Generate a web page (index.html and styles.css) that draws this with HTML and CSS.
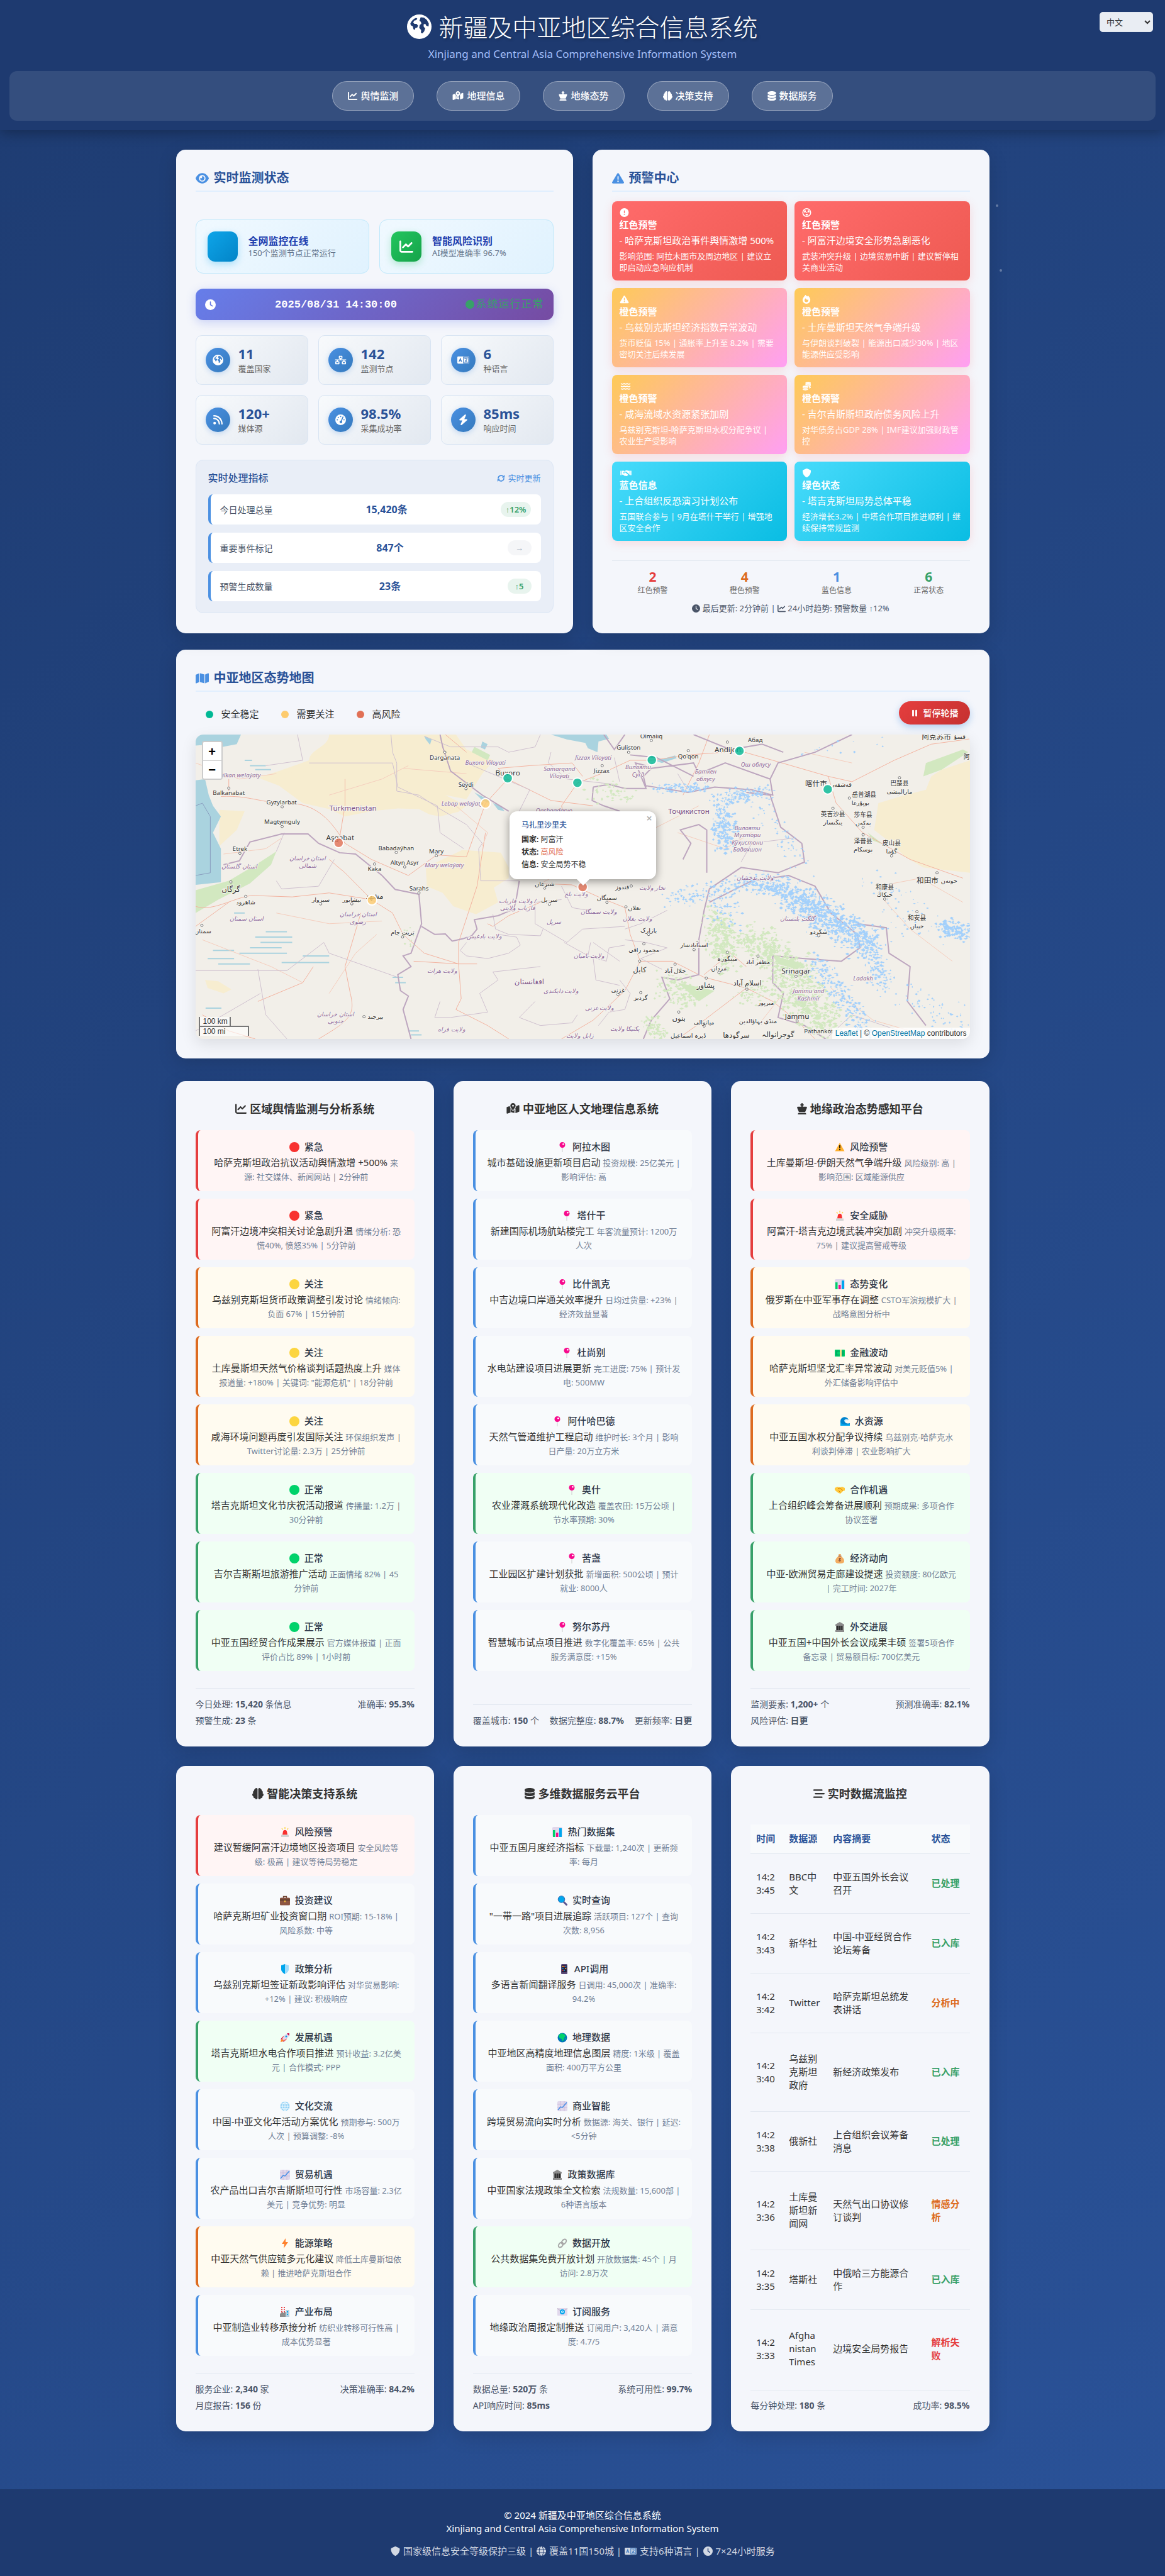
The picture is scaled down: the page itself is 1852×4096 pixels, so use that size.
FILE: index.html
```html
<!DOCTYPE html>
<html lang="zh-CN">
<head>
<meta charset="utf-8">
<meta name="viewport" content="width=device-width, initial-scale=1">
<title>新疆及中亚地区综合信息系统</title>
<link rel="stylesheet" href="styles.css">
</head>
<body>
<svg class="sprite" aria-hidden="true">
  <symbol id="i-earth" viewBox="0 0 512 512"><path fill-rule="evenodd" d="M256 0a256 256 0 1 1 0 512a256 256 0 1 1 0-512zM70 190c20-50 60-95 115-118l30 10-20 35-45 12-20 40 25 28 45 0 30 35-15 40-40 10-10 40-30-15-15-60-40-20zM285 60l70 5 60 50 40 75-5 60-45-15-25-40-35 15 5 50 30 30-20 60-35 45-35-10 5-60-40-45 10-60 35-25-10-40-30-25z"/></symbol>
  <symbol id="i-chart" viewBox="0 0 512 512"><path d="M64 64c0-17.700-14.300-32-32-32S0 46.300 0 64V400c0 44.200 35.800 80 80 80H480c17.700 0 32-14.300 32-32s-14.300-32-32-32H80c-8.800 0-16-7.200-16-16V64zm406.600 86.600c12.500-12.500 12.500-32.800 0-45.300s-32.800-12.500-45.300 0L320 210.700l-57.400-57.400c-12.500-12.500-32.800-12.500-45.300 0l-112 112c-12.500 12.500-12.500 32.800 0 45.300s32.800 12.500 45.300 0L240 221.300l57.400 57.400c12.500 12.500 32.800 12.500 45.300 0l128-128z"/></symbol>
  <symbol id="i-mapdot" viewBox="0 0 576 512"><path fill-rule="evenodd" d="M408 120c0 54.600-73.100 151.900-105.200 192c-7.700 9.600-22 9.600-29.600 0C241.100 271.900 168 174.600 168 120C168 53.700 221.700 0 288 0s120 53.700 120 120zM288 160a40 40 0 1 0 0-80a40 40 0 1 0 0 80zM138 138c6 26 20 54 38 80v208L33 475C17 481 0 469 0 452V202c0-10 6-19 15-22zM384 240c8-12 15-24 22-36 12-20 24-43 31-67l106-42c16-6 33 5 33 22v250c0 10-6 19-15 22l-161 64V240zM192 240c20 32 43 62 61 84 18 22 52 22 70 0l29-38v164l-160-46z"/></symbol>
  <symbol id="i-king" viewBox="0 0 448 512"><path d="M224 0c17.700 0 32 14.300 32 32V48h16c17.700 0 32 14.300 32 32s-14.300 32-32 32H256v48H408c22.100 0 40 17.900 40 40c0 5.300-1 10.500-3.100 15.400L368 400H80L3.100 215.400C1 210.500 0 205.300 0 200c0-22.100 17.900-40 40-40H192V112H176c-17.700 0-32-14.300-32-32s14.300-32 32-32h16V32c0-17.700 14.300-32 32-32zM38.600 473.400L80 432H368l41.400 41.400c4.200 4.200 6.600 10 6.600 16c0 12.500-10.100 22.600-22.600 22.600H54.600C42.100 512 32 501.900 32 489.400c0-6 2.400-11.800 6.600-16z"/></symbol>
  <symbol id="i-brain" viewBox="0 0 512 512"><path d="M184 0c30.900 0 56 25.100 56 56V456c0 30.900-25.100 56-56 56c-28.900 0-52.700-21.900-55.700-50.100c-5.200 1.400-10.700 2.100-16.300 2.100c-35.300 0-64-28.700-64-64c0-7.400 1.300-14.600 3.600-21.200C21.400 367.400 0 338.200 0 304c0-31.900 18.700-59.500 45.800-72.300C37.100 220.800 32 207 32 192c0-30.700 21.600-56.300 50.400-62.600C80.800 123.900 80 118 80 112c0-29.900 20.600-55.100 48.300-62.100C131.300 21.900 155.100 0 184 0zM328 0c28.900 0 52.600 21.900 55.700 49.900c27.800 7 48.300 32.100 48.300 62.100c0 6-.8 11.900-2.400 17.400c28.800 6.200 50.400 31.900 50.400 62.600c0 15-5.100 28.800-13.800 39.700C493.300 244.500 512 272.100 512 304c0 34.200-21.400 63.400-51.600 74.800c2.300 6.600 3.600 13.800 3.600 21.200c0 35.300-28.700 64-64 64c-5.600 0-11.100-.7-16.300-2.100c-3 28.200-26.800 50.100-55.700 50.100c-30.900 0-56-25.100-56-56V56c0-30.900 25.100-56 56-56z"/></symbol>
  <symbol id="i-db" viewBox="0 0 448 512"><path d="M448 80v48c0 44.200-100.300 80-224 80S0 172.200 0 128V80C0 35.800 100.300 0 224 0S448 35.800 448 80zM393.200 214.700c20.800-7.400 39.900-16.900 54.800-28.600V288c0 44.200-100.300 80-224 80S0 332.200 0 288V186.100c14.900 11.800 34 21.200 54.800 28.600C99.700 230.700 159.500 240 224 240s124.300-9.300 169.200-25.300zM0 346.100c14.900 11.800 34 21.200 54.800 28.600C99.700 390.700 159.500 400 224 400s124.300-9.300 169.200-25.300c20.800-7.400 39.900-16.900 54.800-28.600V432c0 44.200-100.300 80-224 80S0 476.200 0 432V346.100z"/></symbol>
  <symbol id="i-eye" viewBox="0 0 576 512"><path d="M288 32c-80.800 0-145.500 36.800-192.600 80.600C48.600 156 17.300 208 2.500 243.700c-3.300 7.900-3.300 16.700 0 24.600C17.300 304 48.600 356 95.400 399.400C142.500 443.200 207.200 480 288 480s145.500-36.800 192.600-80.600c46.800-43.500 78.100-95.400 93-131.100c3.300-7.900 3.300-16.700 0-24.600c-14.900-35.700-46.200-87.700-93-131.100C433.500 68.800 368.800 32 288 32zM144 256a144 144 0 1 1 288 0 144 144 0 1 1 -288 0zm144-64c0 35.300-28.700 64-64 64c-7.100 0-13.900-1.200-20.300-3.300c-5.500-1.800-11.900 1.600-11.700 7.400c.3 6.900 1.300 13.800 3.200 20.700c13.700 51.200 66.400 81.600 117.600 67.900s81.600-66.400 67.900-117.600c-11.100-41.500-47.800-69.400-88.600-71.100c-5.800-.2-9.200 6.100-7.400 11.700c2.100 6.400 3.300 13.200 3.300 20.300z"/></symbol>
  <symbol id="i-warn" viewBox="0 0 512 512"><path d="M256 32c14.200 0 27.300 7.500 34.500 19.800l216 368c7.300 12.400 7.300 27.700 .2 40.100S486.300 480 472 480H40c-14.300 0-27.600-7.700-34.700-20.100s-7-27.800 .2-40.100l216-368C228.700 39.500 241.800 32 256 32zm0 128c-13.300 0-24 10.700-24 24V296c0 13.300 10.700 24 24 24s24-10.700 24-24V184c0-13.300-10.700-24-24-24zm32 224a32 32 0 1 0 -64 0 32 32 0 1 0 64 0z"/></symbol>
  <symbol id="i-excl" viewBox="0 0 512 512"><path d="M256 512A256 256 0 1 0 256 0a256 256 0 1 0 0 512zm0-384c13.300 0 24 10.700 24 24V264c0 13.300-10.700 24-24 24s-24-10.700-24-24V152c0-13.300 10.700-24 24-24zM224 352a32 32 0 1 1 64 0 32 32 0 1 1 -64 0z"/></symbol>
  <symbol id="i-clock" viewBox="0 0 512 512"><path d="M256 0a256 256 0 1 1 0 512A256 256 0 1 1 256 0zM232 120V256c0 8 4 15.500 10.700 20l96 64c11 7.400 25.900 4.400 33.300-6.700s4.400-25.900-6.700-33.300L280 243.200V120c0-13.300-10.700-24-24-24s-24 10.700-24 24z"/></symbol>
  <symbol id="i-net" viewBox="0 0 640 512"><path fill-rule="evenodd" d="M256 32h128c18 0 32 14 32 32v96c0 18-14 32-32 32h-32v32h256c18 0 18 48 0 48h-80v48h48c18 0 32 14 32 32v96c0 18-14 32-32 32H416c-18 0-32-14-32-32v-96c0-18 14-32 32-32h48v-48H176v48h48c18 0 32 14 32 32v96c0 18-14 32-32 32H64c-18 0-32-14-32-32v-96c0-18 14-32 32-32h48v-48H32c-18 0-18-48 0-48h256v-32h-32c-18 0-32-14-32-32V64c0-18 14-32 32-32zm24 56v48h80V88zM88 376v48h112v-48zm352 0v48h112v-48z"/></symbol>
  <symbol id="i-lang" viewBox="0 0 640 512"><path fill-rule="evenodd" d="M48 64h544c26 0 48 22 48 48v288c0 26-22 48-48 48H48c-26 0-48-22-48-48V112c0-26 22-48 48-48z"/><path class="cut" d="M90 350l72-180 72 180M112 296h100M330 100v312h270V100zM376 190h180M466 150v40M400 340c60-24 100-70 120-146M420 240c20 40 60 80 110 100"/></symbol>
  <symbol id="i-rss" viewBox="0 0 448 512"><path d="M0 64C0 46.300 14.300 32 32 32c229.800 0 416 186.200 416 416c0 17.700-14.300 32-32 32s-32-14.300-32-32C384 253.600 226.400 96 32 96C14.300 96 0 81.700 0 64zM0 416a64 64 0 1 1 128 0A64 64 0 1 1 0 416zM32 160c159.100 0 288 128.900 288 288c0 17.700-14.300 32-32 32s-32-14.300-32-32c0-123.700-100.300-224-224-224c-17.700 0-32-14.300-32-32s14.300-32 32-32z"/></symbol>
  <symbol id="i-gauge" viewBox="0 0 512 512"><path fill-rule="evenodd" d="M256 0a256 256 0 1 1 0 512a256 256 0 1 1 0-512zM256 64a32 32 0 1 0 0 64a32 32 0 1 0 0-64zM144 112a32 32 0 1 0 0 64a32 32 0 1 0 0-64zM96 224a32 32 0 1 0 0 64a32 32 0 1 0 0-64zM416 224a32 32 0 1 0 0 64a32 32 0 1 0 0-64zM350 106l-80 186a64 64 0 1 0 44 18l80-184c6-20-34-38-44-20z"/></symbol>
  <symbol id="i-bolt" viewBox="0 0 448 512"><path d="M349.400 44.600c5.900-13.700 1.500-29.700-10.600-38.500s-28.600-8-39.900 1.800l-256 224c-10 8.800-13.600 22.900-8.900 35.300S50.700 288 64 288H175.500L98.600 467.400c-5.900 13.700-1.500 29.700 10.600 38.500s28.600 8 39.900-1.800l256-224c10-8.800 13.600-22.900 8.900-35.300s-16.600-20.700-30-20.700H272.500L349.400 44.600z"/></symbol>
  <symbol id="i-sync" viewBox="0 0 512 512"><path fill="none" stroke="currentColor" stroke-width="64" stroke-linecap="round" d="M80 240C90 90 290 30 400 140M432 272C422 422 222 482 112 372"/><path d="M480 40v152c0 18-14 24-28 24H310zM32 472V320c0-18 14-24 28-24h142z"/></symbol>
  <symbol id="i-map" viewBox="0 0 576 512"><path d="M384 476.100L192 421.200V35.900L384 90.800V476.100zm32-1.200V88.400L543.100 37.500c15.800-6.300 32.900 5.300 32.900 22.300V394.600c0 9.800-6 18.600-15.100 22.300L416 474.800zM15.100 95.100L160 37.200V423.600L32.900 474.500C17.100 480.800 0 469.200 0 452.200V117.400c0-9.800 6-18.600 15.100-22.300z"/></symbol>
  <symbol id="i-rad" viewBox="0 0 512 512"><path fill-rule="evenodd" d="M256 0a256 256 0 1 1 0 512a256 256 0 1 1 0-512zM256 56a200 200 0 1 0 0 400a200 200 0 1 0 0-400z"/><circle cx="256" cy="256" r="36"/><path d="M90 246h98c0-26 12-46 32-58l-50-84c-46 28-78 80-80 142zM422 246h-98c0-26-12-46-32-58l50-84c46 28 78 80 80 142zM256 326c-12 0-24-4-34-10l-50 84c50 30 118 30 168 0l-50-84c-10 6-22 10-34 10z"/></symbol>
  <symbol id="i-fire" viewBox="0 0 448 512"><path fill-rule="evenodd" d="M159 5c8-7 20-6 28 1 28 27 54 56 79 89 11-14 24-30 38-43 8-8 20-8 28 0 36 34 66 79 87 121 21 41 29 83 29 113 0 130-101 226-224 226C100 512 0 416 0 286 0 247 18 199 46 152c28-48 68-100 113-147zM226 416c25 0 47-7 68-21 42-29 53-88 28-134-5-9-16-10-23-2l-25 29c-7 8-18 7-24-1-17-22-47-60-64-81-6-8-18-8-24 0-34 43-52 71-52 102 0 69 51 108 116 108z"/></symbol>
  <symbol id="i-water" viewBox="0 0 576 512"><path fill="none" stroke="currentColor" stroke-width="56" stroke-linecap="round" d="M32 116c60 40 110 40 170-8 60 48 112 48 172 0 60 48 110 48 170 8M32 262c60 40 110 40 170-8 60 48 112 48 172 0 60 48 110 48 170 8M32 408c60 40 110 40 170-8 60 48 112 48 172 0 60 48 110 48 170 8"/></symbol>
  <symbol id="i-coins" viewBox="0 0 512 512"><ellipse cx="336" cy="70" rx="160" ry="64"/><path d="M180 116c50 50 270 50 316 0v44c-20 46-110 64-190 56-40-14-90-20-126-20zM350 240c60-2 120-18 146-46v50c-20 34-70 46-120 50zM380 330c50-6 90-18 116-44v50c-20 34-66 46-116 50z"/><ellipse cx="176" cy="276" rx="160" ry="60"/><path d="M16 314c50 46 270 46 320 0v40c-40 60-280 60-320 0zM16 400c50 46 270 46 320 0v50c-40 70-280 70-320 0z"/></symbol>
  <symbol id="i-hand" viewBox="0 0 640 512"><path d="M0 128h64v256H0zM576 128h64v256h-64zM96 128h100l48 16-80 90c-8 40 50 60 80 30l50-36 150 130c20 30-10 50-30 36 0 30-30 40-50 24-10 24-50 26-66 6-20 20-50 10-60-6l-84-60H96zM544 128H440l-50-24c-40-16-80-4-106 24l-84 92c0 16 26 22 40 8l66-52 32 4 150 132c14 12 20 26 20 40h36z"/></symbol>
  <symbol id="i-shield" viewBox="0 0 512 512"><path d="M256 0c4.600 0 9.200 1 13.400 2.900L457.700 82.800c22 9.300 38.400 31 38.300 57.200c-.5 99.200-41.300 280.700-213.600 363.200c-16.700 8-36.100 8-52.800 0C57.300 420.700 16.500 239.200 16 140c-.1-26.200 16.300-47.900 38.300-57.200L242.700 2.900C246.800 1 251.400 0 256 0z"/></symbol>
  <symbol id="i-globe" viewBox="0 0 512 512"><path d="M352 256c0 22-1 43-3 64H163c-2-21-3-42-3-64s1-43 3-64h186c2 21 3 42 3 64zM504 192c5 20 8 42 8 64s-3 44-8 64H381c2-21 3-42 3-64s-1-43-3-64zM493 160H377C367 96 347 43 322 10c79 20 142 77 171 150zM345 160H167c6-36 16-69 27-95 22-50 46-65 62-65s40 15 62 65c12 26 21 59 27 95zM135 160H19C48 87 111 30 190 10c-26 33-45 86-55 150zM8 192h123c-2 21-3 42-3 64s1 43 3 64H8c-5-20-8-42-8-64s3-44 8-64zM167 352h178c-6 36-15 68-27 95-22 50-46 65-62 65s-40-15-62-65c-11-27-21-59-27-95zM135 352c10 64 29 117 55 150C111 482 48 425 19 352zM493 352c-29 73-92 130-171 150 26-33 45-86 55-150z"/></symbol>
  <symbol id="i-stream" viewBox="0 0 512 512"><path d="M32 64h352c40 0 40 64 0 64H32c-42 0-42-64 0-64zM96 224h384c40 0 40 64 0 64H96c-42 0-42-64 0-64zM32 384h352c40 0 40 64 0 64H32c-42 0-42-64 0-64z"/></symbol>
  <symbol id="i-pause" viewBox="0 0 320 512"><rect x="16" y="64" width="104" height="384" rx="44"/><rect x="200" y="64" width="104" height="384" rx="44"/></symbol>

  <symbol id="e-red" viewBox="0 0 16 16"><circle cx="8" cy="8" r="8" fill="#f8312f"/></symbol>
  <symbol id="e-yellow" viewBox="0 0 16 16"><circle cx="8" cy="8" r="8" fill="#fcd53f"/></symbol>
  <symbol id="e-green" viewBox="0 0 16 16"><circle cx="8" cy="8" r="8" fill="#00d26a"/></symbol>
  <symbol id="e-pin" viewBox="0 0 16 16"><path stroke="#ccc" stroke-width="1" d="M8 8v8"/><circle cx="8" cy="4.500" r="4.500" fill="#f70a8d"/><circle cx="9.400" cy="3.200" r="1.300" fill="#fff"/></symbol>
  <symbol id="e-warn" viewBox="0 0 16 16"><path fill="#ffb02e" d="M8 1l7.500 13.500H.5z"/><path fill="#000" d="M7.200 5h1.600v5H7.200zM7.200 11h1.600v2H7.200z"/></symbol>
  <symbol id="e-siren" viewBox="0 0 16 16"><path stroke="#fcd53f" stroke-width="1.300" d="M8 0v3M3 2l1.500 2.500M13 2l-1.500 2.500"/><path fill="#f8312f" d="M4 12.500L5 7c1-3 5-3 6 0l1 5.500z"/><path fill="#d3d3d3" d="M2 12.500h12V16H2z"/></symbol>
  <symbol id="e-bars" viewBox="0 0 16 16"><rect width="16" height="16" rx="2" fill="#e1d8ec"/><path fill="#00d26a" d="M1 5h3.500v11H1z"/><path fill="#f70a8d" d="M6 9h3.500v7H6z"/><path fill="#00a6ed" d="M11 2h4v14h-4z"/></symbol>
  <symbol id="e-cash" viewBox="0 0 16 16"><rect y="3" width="16" height="11" rx="1" fill="#00d26a"/><rect x="1.500" y="4.500" width="13" height="8" fill="#008463" opacity=".5"/><circle cx="6" cy="8.500" r="2.500" fill="#00d26a"/><path fill="#f9e08b" d="M8 3h3v11H8z"/></symbol>
  <symbol id="e-wave" viewBox="0 0 16 16"><path fill="#0084ce" d="M1 15V8c0-8 11-9 13-2-3-2-6-1-6 2s4 4 8 3v4z"/><path fill="#d3efff" d="M7 8c0-3 3-5 7-2l-2 1c-2-1-3 0-3 2z"/><path fill="#00a6ed" d="M1 15V9c2 4 6 5 15 3v3z"/></symbol>
  <symbol id="e-hands" viewBox="0 0 16 16"><path fill="#ffc83d" d="M0 5l4-2 4 1 4-1 4 2v4l-3 1-4 4-3-1-4-3-2-2z"/><path fill="none" stroke="#d67d00" d="M5 6l3-1 5 4M6 9l3 3"/></symbol>
  <symbol id="e-bag" viewBox="0 0 16 16"><path fill="#f3ad61" d="M6 1h4l-1 3c4 2 6 5 6 8s-2 4-7 4-7-1-7-4 2-6 6-8z"/><path fill="#a56953" d="M5.500 3.500h5v1.400h-5z"/><path fill="none" stroke="#7d4533" d="M10 8.500c-3-2-4 1-2 1.500s2 3-2 1.500M8 7v6"/></symbol>
  <symbol id="e-bank" viewBox="0 0 16 16"><path fill="#8c8c8c" d="M8 0l7 4v2H1V4zM1 13h14v3H1z"/><path fill="#636363" d="M2 6h12v7H2z"/><path fill="#222" d="M4 6h1.500v7H4zM7.200 6h1.600v7H7.200zM10.500 6H12v7h-1.500z"/></symbol>
  <symbol id="e-case" viewBox="0 0 16 16"><path fill="none" stroke="#6d4534" stroke-width="1.300" d="M5.500 4V1.500h5V4"/><rect y="3.500" width="16" height="12" rx="1.500" fill="#8c5543"/><path fill="#6d4534" d="M0 5h16v4H0z"/><path fill="#f9c23c" d="M7 8h2v2.500H7z"/></symbol>
  <symbol id="e-shield" viewBox="0 0 16 16"><path fill="#00a6ed" d="M8 0L2 2v6c0 4 3 6 6 8z"/><path fill="#9fdcfb" d="M8 0l6 2v6c0 4-3 6-6 8z"/></symbol>
  <symbol id="e-rocket" viewBox="0 0 16 16"><path fill="#f8312f" d="M3 8l3-3 3 1-4 4zM8 13l3-3-1-3-4 4z"/><path fill="#e1d8ec" d="M4 10C6 4 10 1 15 1c0 5-3 9-9 11z"/><path fill="#ca0b4a" d="M11 1.500C12 1 14 1 15 1c0 1 0 3-.5 4z"/><circle cx="10" cy="6" r="1.500" fill="#00a6ed"/><path fill="#ff822d" d="M1 15l1-4 2-1 2 2-1 2z"/><path fill="#ca0b4a" d="M3 8L1 11l3-1zM8 13l-3 2 1-3z"/></symbol>
  <symbol id="e-globe" viewBox="0 0 16 16"><circle cx="8" cy="8" r="7.500" fill="#8fd0f5"/><path fill="none" stroke="#fff" stroke-width=".9" d="M8 .5v15M.5 8h15M2 4h12M2 12h12M8 .5c-5 4-5 11 0 15M8 .5c5 4 5 11 0 15"/></symbol>
  <symbol id="e-trend" viewBox="0 0 16 16"><rect width="16" height="16" rx="2" fill="#e1d8ec"/><path stroke="#c5b5d6" stroke-width=".7" d="M0 5h16M0 10h16M5 0v16M11 0v16"/><path fill="none" stroke="#3f8be8" stroke-width="1.400" d="M1 14l4-5 3 1 7-8"/></symbol>
  <symbol id="e-bolt" viewBox="0 0 16 16"><path fill="#ff822d" d="M9 0L3 9h4l-1 7 7-10H9z"/></symbol>
  <symbol id="e-factory" viewBox="0 0 16 16"><path fill="#e5484d" d="M2 0h2v9H2zM6 0h2v9H6z"/><path fill="#fff" d="M2 2h2v1.500H2zM6 2h2v1.500H6zM2 5h2v1.500H2zM6 5h2v1.500H6z"/><path fill="#8c8c8c" d="M0 11l5-3v2l4-2v8H0z"/><path fill="#b4cfe0" d="M9 5h6v11H9z"/><path fill="#00a6ed" d="M11 7h2v2h-2zM11 11h2v2h-2z"/></symbol>
  <symbol id="e-search" viewBox="0 0 16 16"><path stroke="#5b5590" stroke-width="3" stroke-linecap="round" d="M10 10l4.500 4.500"/><circle cx="6.500" cy="6" r="5.300" fill="#00a6ed" stroke="#3b6cb3"/></symbol>
  <symbol id="e-phone" viewBox="0 0 16 16"><rect x="3" width="10" height="16" rx="1.500" fill="#5a4a78"/><path fill="#26203a" d="M4.200 2h7.600v11H4.200z"/><path fill="#f9c23c" d="M5 3h1.700v1.700H5zM9.500 6h1.700v1.700H9.500z"/><path fill="#f8312f" d="M7.200 3h1.700v1.700H7.200zM5 9h1.700v1.700H5z"/><path fill="#00a6ed" d="M9.500 3h1.700v1.700H9.500zM5 6h1.700v1.700H5zM7.200 9h1.700v1.700H7.200z"/></symbol>
  <symbol id="e-earth" viewBox="0 0 16 16"><circle cx="8" cy="8" r="7.500" fill="#0074ba"/><path fill="#00d26a" d="M3 3l4-2 5 2 1 3-2 2-1 4-2 2-1-4-3-1-2-3zM12 9l2 0-1 3z"/></symbol>
  <symbol id="e-link" viewBox="0 0 16 16"><g fill="none" stroke="#a6a6a6" stroke-width="2"><ellipse cx="5.500" cy="10.500" rx="3" ry="4.500" transform="rotate(40 5.500 10.500)"/><ellipse cx="10.500" cy="5.500" rx="3" ry="4.500" transform="rotate(40 10.500 5.500)"/></g></symbol>
  <symbol id="e-mail" viewBox="0 0 16 16"><rect y="2" width="16" height="12" rx="1" fill="#e1d8ec"/><path fill="none" stroke="#b4acbc" d="M0 2.500l8 6 8-6"/><circle cx="8" cy="8" r="4" fill="#00a6ed"/><circle cx="8" cy="8" r="1.500" fill="none" stroke="#fff"/></symbol>
</svg>

<span class="particle particle-a"></span><span class="particle particle-b"></span>

<header class="site-header">
  <select class="lang-select" aria-label="语言"><option>中文</option><option>English</option></select>
  <h1 class="site-title"><svg class="ic"><use href="#i-earth"/></svg>新疆及中亚地区综合信息系统</h1>
  <p class="site-sub">Xinjiang and Central Asia Comprehensive Information System</p>
  <nav class="nav">
    <a href="#opinion"><svg class="ic"><use href="#i-chart"/></svg>舆情监测</a>
    <a href="#geo"><svg class="ic wide"><use href="#i-mapdot"/></svg>地理信息</a>
    <a href="#politics"><svg class="ic narrow"><use href="#i-king"/></svg>地缘态势</a>
    <a href="#decision"><svg class="ic"><use href="#i-brain"/></svg>决策支持</a>
    <a href="#data"><svg class="ic narrow"><use href="#i-db"/></svg>数据服务</a>
  </nav>
</header>

<main class="main">
<div class="top-grid">
  <section class="card">
    <h2 class="card-title"><svg class="ic wide"><use href="#i-eye"/></svg>实时监测状态</h2>
    <div class="status-grid">
      <div class="status"><span class="status-icon sky"></span><div><strong>全网监控在线</strong><p>150个监测节点正常运行</p></div></div>
      <div class="status"><span class="status-icon green"><svg class="ic"><use href="#i-chart"/></svg></span><div><strong>智能风险识别</strong><p>AI模型准确率 96.7%</p></div></div>
    </div>
    <div class="timebar"><svg class="ic"><use href="#i-clock"/></svg><time>2025/08/31 14:30:00</time><span class="running">系统运行正常</span></div>
    <div class="metric-grid">
      <div class="metric"><span class="disc"><svg class="ic"><use href="#i-earth"/></svg></span><div><strong>11</strong><p>覆盖国家</p></div></div>
      <div class="metric"><span class="disc"><svg class="ic wide"><use href="#i-net"/></svg></span><div><strong>142</strong><p>监测节点</p></div></div>
      <div class="metric"><span class="disc"><svg class="ic wide"><use href="#i-lang"/></svg></span><div><strong>6</strong><p>种语言</p></div></div>
      <div class="metric"><span class="disc"><svg class="ic"><use href="#i-rss"/></svg></span><div><strong>120+</strong><p>媒体源</p></div></div>
      <div class="metric"><span class="disc"><svg class="ic"><use href="#i-gauge"/></svg></span><div><strong>98.5%</strong><p>采集成功率</p></div></div>
      <div class="metric"><span class="disc"><svg class="ic"><use href="#i-bolt"/></svg></span><div><strong>85ms</strong><p>响应时间</p></div></div>
    </div>
    <div class="panel">
      <div class="panel-head"><h3>实时处理指标</h3><span><svg class="ic"><use href="#i-sync"/></svg>实时更新</span></div>
      <div class="panel-row"><span>今日处理总量</span><strong>15,420条</strong><em>↑12%</em></div>
      <div class="panel-row"><span>重要事件标记</span><strong>847个</strong><em class="flat">→</em></div>
      <div class="panel-row"><span>预警生成数量</span><strong>23条</strong><em>↑5</em></div>
    </div>
  </section>

  <section class="card">
    <h2 class="card-title"><svg class="ic"><use href="#i-warn"/></svg>预警中心</h2>
    <div class="alert-grid">
      <article class="alert red"><svg class="ic"><use href="#i-excl"/></svg><strong>红色预警</strong><p>- 哈萨克斯坦政治事件舆情激增 500%</p><small>影响范围: 阿拉木图市及周边地区 | 建议立<br>即启动应急响应机制</small></article>
      <article class="alert red"><svg class="ic"><use href="#i-rad"/></svg><strong>红色预警</strong><p>- 阿富汗边境安全形势急剧恶化</p><small>武装冲突升级 | 边境贸易中断 | 建议暂停相<br>关商业活动</small></article>
      <article class="alert orange"><svg class="ic"><use href="#i-warn"/></svg><strong>橙色预警</strong><p>- 乌兹别克斯坦经济指数异常波动</p><small>货币贬值 15% | 通胀率上升至 8.2% | 需要<br>密切关注后续发展</small></article>
      <article class="alert orange"><svg class="ic narrow"><use href="#i-fire"/></svg><strong>橙色预警</strong><p>- 土库曼斯坦天然气争端升级</p><small>与伊朗谈判破裂 | 能源出口减少30% | 地区<br>能源供应受影响</small></article>
      <article class="alert orange"><svg class="ic wide"><use href="#i-water"/></svg><strong>橙色预警</strong><p>- 咸海流域水资源紧张加剧</p><small>乌兹别克斯坦-哈萨克斯坦水权分配争议 |<br>农业生产受影响</small></article>
      <article class="alert orange"><svg class="ic"><use href="#i-coins"/></svg><strong>橙色预警</strong><p>- 吉尔吉斯斯坦政府债务风险上升</p><small>对华债务占GDP 28% | IMF建议加强财政管<br>控</small></article>
      <article class="alert cyan"><svg class="ic wider"><use href="#i-hand"/></svg><strong>蓝色信息</strong><p>- 上合组织反恐演习计划公布</p><small>五国联合参与 | 9月在塔什干举行 | 增强地<br>区安全合作</small></article>
      <article class="alert cyan"><svg class="ic"><use href="#i-shield"/></svg><strong>绿色状态</strong><p>- 塔吉克斯坦局势总体平稳</p><small>经济增长3.2% | 中塔合作项目推进顺利 | 继<br>续保持常规监测</small></article>
    </div>
    <div class="alert-sum">
      <div><strong class="c-red">2</strong><span>红色预警</span></div>
      <div><strong class="c-orange">4</strong><span>橙色预警</span></div>
      <div><strong class="c-blue">1</strong><span>蓝色信息</span></div>
      <div><strong class="c-green">6</strong><span>正常状态</span></div>
    </div>
    <p class="alert-note"><svg class="ic"><use href="#i-clock"/></svg> 最后更新: 2分钟前 | <svg class="ic"><use href="#i-chart"/></svg> 24小时趋势: 预警数量 ↑12%</p>
  </section>
</div>

<section class="card map-card">
  <h2 class="card-title"><svg class="ic wide"><use href="#i-map"/></svg>中亚地区态势地图</h2>
  <div class="map-bar">
    <ul class="legend"><li class="l-safe">安全稳定</li><li class="l-watch">需要关注</li><li class="l-risk">高风险</li></ul>
    <button class="pause" type="button"><svg class="ic narrow"><use href="#i-pause"/></svg>暂停轮播</button>
  </div>
  <div class="map">
    <svg class="map-svg" viewBox="0 0 1272 500" preserveAspectRatio="xMidYMid slice" role="img" aria-label="中亚地区地图">
      <g transform="scale(.8673 .4401) translate(-47 -334)">
        <g class="sand">
          <path d="M300 334C300 380 262 390 262 430L205 470 165 495 205 525 250 590 300 612 330 640 380 620 430 610 470 612 490 632 510 640 545 622 560 600 520 560 560 575 590 480 612 430 560 390 540 334z"/>
          <path d="M552 765L590 770 625 775 640 830 640 870 612 905 620 960 578 1005 535 975 515 925 485 900 483 830z"/>
          <path d="M92 615L140 620 125 690 92 750z"/>
          <path d="M1514 430L1460 465 1440 490 1430 540 1390 560 1340 590 1332 690 1365 740 1390 790 1425 830 1514 850z"/>
          <path d="M65 1250L90 1255 115 1285 100 1300 70 1280zM200 480L260 470 255 490 200 500z"/>
        </g>
        <g class="sea">
          <path d="M47 334H133L125 370 85 385 65 372 47 375z"/>
          <path d="M47 505L65 500 72 560 80 600 95 640 80 700 95 760 95 885 47 895z"/>
          <path d="M720 334H825L830 350 810 360 808 400 790 385 785 365 750 352zM918 432L955 412 958 422 930 440zM590 360l10 10-5 20-8-8zM575 550L600 575 605 590 590 580zM610 590L625 600 632 620 620 615zM480 340l14 12-3 20-8-20z"/>
        </g>
        <g class="wood">
          <path d="M47 915L110 880 165 815 200 770 190 820 150 890 90 950 47 1000z"/>
          <path d="M575 380L605 410 600 430 570 400zM1430 440L1500 390 1510 400 1460 465 1425 490zM1320 700L1350 745 1330 730zM1140 1160L1200 1190 1185 1210 1150 1190zM960 1260L1030 1290 1000 1330z"/>
        </g>
        <path class="marsh" d="M180 1070h40M160 1090h70M170 1110h60M150 1130h60M130 1150h90M80 1140h40M70 1170h50M120 1000h20M90 1190h60M210 1185h90M250 1160h50M420 1240h20M425 1260h20M450 1440h20M455 1455h20M140 430h14M150 450h30M160 465h30M66 1355h30"/>
        <path class="road" d="M95 565C150 560 170 590 220 590S300 640 330 740L380 800 450 860 503 784 560 790 596 591 638 500M318 740L330 600 330 500M110 500L110 560M47 975C80 1000 130 930 160 935L230 940 300 925 380 950 420 1000 440 1080 480 1150 545 1190 550 1320 540 1360 600 1420 640 1470M545 1190L545 1110 580 900 596 700M380 950L330 850 300 800M47 1050L110 960M280 1470C340 1400 350 1380 340 1300L330 1200 360 1000M160 1470L110 1440 60 1380M165 1330L250 1260 270 1200M560 400L520 334M638 500L620 460 680 450 760 440 780 490M770 515L815 480 870 430 912 430M638 500L720 580 800 600M770 515L740 600 745 640M912 430L980 410 1078 395 1140 430 1245 490 1290 510 1370 430 1440 370 1514 350M1245 490L1260 590 1310 700 1400 800 1500 870M545 1190L460 1180M580 1190L545 1190M600 1040L610 1050 640 1010 700 960M889 1180L950 1180 1010 1240 1090 1280 1140 1330 1190 1410 1220 1470M889 1180L860 1290 800 1400 740 1470M889 1180L870 1080 860 980 810 940 760 895 700 890M1090 1280L1010 1400 960 1470M1090 1200L1060 1150 1010 1230M970 560L1000 440 1020 334"/>
        <path class="road2" d="M47 440L130 500 200 480M300 560L400 500 450 450M440 460L560 480M100 780L180 760 210 720M200 1000L300 1040 400 1030M60 1100L190 1200 250 1260M390 1080L350 1150 300 1300M740 850L700 890M1100 700L1050 760 960 700M1340 900L1420 870 1500 960M1350 950L1400 1060 1480 1180M1000 600L900 700 860 640M1200 400L1290 440M1120 1400L1160 1300M1250 1280L1330 1400 1400 1440M590 750L600 700 540 600"/>
        <path class="state" d="M240 334L250 430 180 450M262 440L420 440 430 530 505 600 510 700 555 760M417 334L420 400 428 440 428 545 470 560 500 600 560 670 590 740 583 760 587 880H660M200 770L215 700M200 880L210 910 280 900 310 800M47 1215H220L290 1110 300 1150 430 1240M170 1300L100 1380 47 1440M165 1210L180 1380 220 1470M610 1005L615 1060 640 1080 700 1085 705 1060M560 1110L548 1140 560 1160 600 1170 640 1150 662 1120 655 1090 620 1080M740 950L690 960 690 1040 750 1110 780 1060 860 1050M860 1120L830 1130 825 1180 790 1160 795 1110M745 1110L800 1170 805 1250 850 1270M700 1200L610 1220 620 1250 585 1300 600 1370 530 1390 500 1390 510 1330M690 1330L660 1390 700 1420 760 1410 770 1380M860 1100L900 1110 940 1130 890 1170 930 1210M850 1250L870 1300 860 1360 830 1370 810 1420M740 900L760 980 790 990M860 1060L890 1040 940 990M1080 810L1100 740 1180 720M1240 1470L1290 1380 1380 1440M480 340L530 380 620 380 640 400 690 380 700 334M720 400L715 440 750 500 840 520M560 440L680 540 660 620M840 420L850 510M960 480L975 530M800 1110L850 1180"/>
        <path class="border" d="M510 334L515 380 530 470 590 560 640 620M100 820L130 805 150 735 210 705 260 705 280 740 320 775 350 780 400 860 425 912 470 930 475 1040 455 1150 440 1160 455 1200 430 1230 435 1290 450 1310 440 1360 455 1470M475 1050L500 1080 520 1078 533 1105 555 1095 570 1085 580 1060 575 1025 620 1010 650 985 655 940 660 880M800 530L830 520 860 535 900 535 880 440 900 450M800 530L798 580 820 600 850 620 852 660M820 334L840 390 860 334M900 530L895 490 910 460 990 440 1000 480 1050 440 1135 500 1140 560 1100 540 1030 530 980 550 900 525M870 410L920 420 950 450 990 490M970 800L985 740 965 690 1000 670 1015 690 1015 770 1015 850M1090 550L1135 560 1155 680 1195 740 1200 810 1150 850 1080 830 1020 910 1010 990 1000 1100 1000 1230 960 1250 930 1240 945 1320 910 1400 895 1470M1020 960L1100 880 1170 860 1220 900 1250 1000 1300 1080 1305 1130 1270 1180 1200 1170 1140 1160 1140 1260 1160 1300 1150 1390 1200 1420 1240 1470M1300 1040L1355 1055 1360 1150 1400 1200 1395 1330 1430 1420M1135 500L1150 440 1220 400 1290 334M990 334L1060 390 1120 370 1160 400"/>
        <path class="lines" d="M47 600L60 590 75 640 75 850 47 860"/>
        <path id="woodland" class="woodland"/>
        <path id="glaciers" class="glacier"/>
      </g>
      <g id="labels"></g>
      <g id="markers"></g>
    </svg>
    <div class="popup">
      <button type="button" class="popup-close" aria-label="关闭">×</button>
      <strong class="popup-title">马扎里沙里夫</strong>
      <p><b>国家:</b> 阿富汗</p><p><b>状态:</b> <span class="risk">高风险</span></p><p><b>信息:</b> 安全局势不稳</p>
    </div>
    <div class="zoom"><button type="button" aria-label="放大">+</button><button type="button" aria-label="缩小">−</button></div>
    <div class="scale"><span class="km">100 km</span><span class="mi">100 mi</span></div>
    <div class="attrib"><a href="#leaflet">Leaflet</a> | © <a href="#osm">OpenStreetMap</a> contributors</div>
  </div>
</section>

<div class="feeds">
  <section class="card feed" id="opinion">
    <h3><svg class="ic"><use href="#i-chart"/></svg>区域舆情监测与分析系统</h3>
    <ul>
      <li class="red"><strong><svg><use href="#e-red"/></svg>紧急</strong><p>哈萨克斯坦政治抗议活动舆情激增 +500% <small>来<br>源: 社交媒体、新闻网站 | 2分钟前</small></p></li>
      <li class="red"><strong><svg><use href="#e-red"/></svg>紧急</strong><p>阿富汗边境冲突相关讨论急剧升温 <small>情绪分析: 恐<br>慌40%, 愤怒35% | 5分钟前</small></p></li>
      <li class="orange"><strong><svg><use href="#e-yellow"/></svg>关注</strong><p>乌兹别克斯坦货币政策调整引发讨论 <small>情绪倾向:<br>负面 67% | 15分钟前</small></p></li>
      <li class="orange"><strong><svg><use href="#e-yellow"/></svg>关注</strong><p>土库曼斯坦天然气价格谈判话题热度上升 <small>媒体<br>报道量: +180% | 关键词: "能源危机" | 18分钟前</small></p></li>
      <li class="orange"><strong><svg><use href="#e-yellow"/></svg>关注</strong><p>咸海环境问题再度引发国际关注 <small>环保组织发声 |<br>Twitter讨论量: 2.3万 | 25分钟前</small></p></li>
      <li class="green"><strong><svg><use href="#e-green"/></svg>正常</strong><p>塔吉克斯坦文化节庆祝活动报道 <small>传播量: 1.2万 |<br>30分钟前</small></p></li>
      <li class="green"><strong><svg><use href="#e-green"/></svg>正常</strong><p>吉尔吉斯斯坦旅游推广活动 <small>正面情绪 82% | 45<br>分钟前</small></p></li>
      <li class="green"><strong><svg><use href="#e-green"/></svg>正常</strong><p>中亚五国经贸合作成果展示 <small>官方媒体报道 | 正面<br>评价占比 89% | 1小时前</small></p></li>
    </ul>
    <div class="feed-foot"><span>今日处理: <b>15,420</b> 条信息</span><span>准确率: <b>95.3%</b></span><span>预警生成: <b>23</b> 条</span></div>
  </section>

  <section class="card feed" id="geo">
    <h3><svg class="ic wide"><use href="#i-mapdot"/></svg>中亚地区人文地理信息系统</h3>
    <ul>
      <li><strong><svg><use href="#e-pin"/></svg>阿拉木图</strong><p>城市基础设施更新项目启动 <small>投资规模: 25亿美元 |<br>影响评估: 高</small></p></li>
      <li><strong><svg><use href="#e-pin"/></svg>塔什干</strong><p>新建国际机场航站楼完工 <small>年客流量预计: 1200万<br>人次</small></p></li>
      <li><strong><svg><use href="#e-pin"/></svg>比什凯克</strong><p>中吉边境口岸通关效率提升 <small>日均过货量: +23% |<br>经济效益显著</small></p></li>
      <li><strong><svg><use href="#e-pin"/></svg>杜尚别</strong><p>水电站建设项目进展更新 <small>完工进度: 75% | 预计发<br>电: 500MW</small></p></li>
      <li><strong><svg><use href="#e-pin"/></svg>阿什哈巴德</strong><p>天然气管道维护工程启动 <small>维护时长: 3个月 | 影响<br>日产量: 20万立方米</small></p></li>
      <li class="green"><strong><svg><use href="#e-pin"/></svg>奥什</strong><p>农业灌溉系统现代化改造 <small>覆盖农田: 15万公顷 |<br>节水率预期: 30%</small></p></li>
      <li><strong><svg><use href="#e-pin"/></svg>苦盏</strong><p>工业园区扩建计划获批 <small>新增面积: 500公顷 | 预计<br>就业: 8000人</small></p></li>
      <li><strong><svg><use href="#e-pin"/></svg>努尔苏丹</strong><p>智慧城市试点项目推进 <small>数字化覆盖率: 65% | 公共<br>服务满意度: +15%</small></p></li>
    </ul>
    <div class="feed-foot"><span>覆盖城市: <b>150</b> 个</span><span>数据完整度: <b>88.7%</b></span><span>更新频率: <b>日更</b></span></div>
  </section>

  <section class="card feed" id="politics">
    <h3><svg class="ic narrow"><use href="#i-king"/></svg>地缘政治态势感知平台</h3>
    <ul>
      <li class="red"><strong><svg><use href="#e-warn"/></svg>风险预警</strong><p>土库曼斯坦-伊朗天然气争端升级 <small>风险级别: 高 |<br>影响范围: 区域能源供应</small></p></li>
      <li class="red"><strong><svg><use href="#e-siren"/></svg>安全威胁</strong><p>阿富汗-塔吉克边境武装冲突加剧 <small>冲突升级概率:<br>75% | 建议提高警戒等级</small></p></li>
      <li class="orange"><strong><svg><use href="#e-bars"/></svg>态势变化</strong><p>俄罗斯在中亚军事存在调整 <small>CSTO军演规模扩大 |<br>战略意图分析中</small></p></li>
      <li class="orange"><strong><svg><use href="#e-cash"/></svg>金融波动</strong><p>哈萨克斯坦坚戈汇率异常波动 <small>对美元贬值5% |<br>外汇储备影响评估中</small></p></li>
      <li class="orange"><strong><svg><use href="#e-wave"/></svg>水资源</strong><p>中亚五国水权分配争议持续 <small>乌兹别克-哈萨克水<br>利谈判停滞 | 农业影响扩大</small></p></li>
      <li class="green"><strong><svg><use href="#e-hands"/></svg>合作机遇</strong><p>上合组织峰会筹备进展顺利 <small>预期成果: 多项合作<br>协议签署</small></p></li>
      <li class="green"><strong><svg><use href="#e-bag"/></svg>经济动向</strong><p>中亚-欧洲贸易走廊建设提速 <small>投资额度: 80亿欧元<br>| 完工时间: 2027年</small></p></li>
      <li class="green"><strong><svg><use href="#e-bank"/></svg>外交进展</strong><p>中亚五国+中国外长会议成果丰硕 <small>签署5项合作<br>备忘录 | 贸易额目标: 700亿美元</small></p></li>
    </ul>
    <div class="feed-foot"><span>监测要素: <b>1,200+</b> 个</span><span>预测准确率: <b>82.1%</b></span><span>风险评估: <b>日更</b></span></div>
  </section>

  <section class="card feed" id="decision">
    <h3><svg class="ic"><use href="#i-brain"/></svg>智能决策支持系统</h3>
    <ul>
      <li class="red"><strong><svg><use href="#e-siren"/></svg>风险预警</strong><p>建议暂缓阿富汗边境地区投资项目 <small>安全风险等<br>级: 极高 | 建议等待局势稳定</small></p></li>
      <li><strong><svg><use href="#e-case"/></svg>投资建议</strong><p>哈萨克斯坦矿业投资窗口期 <small>ROI预期: 15-18% |<br>风险系数: 中等</small></p></li>
      <li><strong><svg><use href="#e-shield"/></svg>政策分析</strong><p>乌兹别克斯坦签证新政影响评估 <small>对华贸易影响:<br>+12% | 建议: 积极响应</small></p></li>
      <li class="green"><strong><svg><use href="#e-rocket"/></svg>发展机遇</strong><p>塔吉克斯坦水电合作项目推进 <small>预计收益: 3.2亿美<br>元 | 合作模式: PPP</small></p></li>
      <li><strong><svg><use href="#e-globe"/></svg>文化交流</strong><p>中国-中亚文化年活动方案优化 <small>预期参与: 500万<br>人次 | 预算调整: -8%</small></p></li>
      <li><strong><svg><use href="#e-trend"/></svg>贸易机遇</strong><p>农产品出口吉尔吉斯斯坦可行性 <small>市场容量: 2.3亿<br>美元 | 竞争优势: 明显</small></p></li>
      <li class="orange"><strong><svg><use href="#e-bolt"/></svg>能源策略</strong><p>中亚天然气供应链多元化建议 <small>降低土库曼斯坦依<br>赖 | 推进哈萨克斯坦合作</small></p></li>
      <li><strong><svg><use href="#e-factory"/></svg>产业布局</strong><p>中亚制造业转移承接分析 <small>纺织业转移可行性高 |<br>成本优势显著</small></p></li>
    </ul>
    <div class="feed-foot"><span>服务企业: <b>2,340</b> 家</span><span>决策准确率: <b>84.2%</b></span><span>月度报告: <b>156</b> 份</span></div>
  </section>

  <section class="card feed" id="data">
    <h3><svg class="ic narrow"><use href="#i-db"/></svg>多维数据服务云平台</h3>
    <ul>
      <li><strong><svg><use href="#e-bars"/></svg>热门数据集</strong><p>中亚五国月度经济指标 <small>下载量: 1,240次 | 更新频<br>率: 每月</small></p></li>
      <li><strong><svg><use href="#e-search"/></svg>实时查询</strong><p>"一带一路"项目进展追踪 <small>活跃项目: 127个 | 查询<br>次数: 8,956</small></p></li>
      <li><strong><svg><use href="#e-phone"/></svg>API调用</strong><p>多语言新闻翻译服务 <small>日调用: 45,000次 | 准确率:<br>94.2%</small></p></li>
      <li><strong><svg><use href="#e-earth"/></svg>地理数据</strong><p>中亚地区高精度地理信息图层 <small>精度: 1米级 | 覆盖<br>面积: 400万平方公里</small></p></li>
      <li><strong><svg><use href="#e-trend"/></svg>商业智能</strong><p>跨境贸易流向实时分析 <small>数据源: 海关、银行 | 延迟:<br>&lt;5分钟</small></p></li>
      <li><strong><svg><use href="#e-bank"/></svg>政策数据库</strong><p>中亚国家法规政策全文检索 <small>法规数量: 15,600部 |<br>6种语言版本</small></p></li>
      <li class="green"><strong><svg><use href="#e-link"/></svg>数据开放</strong><p>公共数据集免费开放计划 <small>开放数据集: 45个 | 月<br>访问: 2.8万次</small></p></li>
      <li><strong><svg><use href="#e-mail"/></svg>订阅服务</strong><p>地缘政治周报定制推送 <small>订阅用户: 3,420人 | 满意<br>度: 4.7/5</small></p></li>
    </ul>
    <div class="feed-foot"><span>数据总量: <b>520万</b> 条</span><span>系统可用性: <b>99.7%</b></span><span>API响应时间: <b>85ms</b></span></div>
  </section>

  <section class="card feed" id="stream">
    <h3><svg class="ic"><use href="#i-stream"/></svg>实时数据流监控</h3>
    <table class="stream">
      <thead><tr><th class="t-time">时间</th><th class="t-src">数据源</th><th>内容摘要</th><th class="t-stat">状态</th></tr></thead>
      <tbody>
        <tr><td>14:23:45</td><td>BBC中文</td><td>中亚五国外长会议召开</td><td class="c-green">已处理</td></tr>
        <tr><td>14:23:43</td><td>新华社</td><td>中国-中亚经贸合作论坛筹备</td><td class="c-green">已入库</td></tr>
        <tr><td>14:23:42</td><td>Twitter</td><td>哈萨克斯坦总统发表讲话</td><td class="c-orange">分析中</td></tr>
        <tr class="tall"><td>14:23:40</td><td>乌兹别克斯坦政府</td><td>新经济政策发布</td><td class="c-green">已入库</td></tr>
        <tr><td>14:23:38</td><td>俄新社</td><td>上合组织会议筹备消息</td><td class="c-green">已处理</td></tr>
        <tr class="tall"><td>14:23:36</td><td>土库曼斯坦新闻网</td><td>天然气出口协议修订谈判</td><td class="c-orange">情感分析</td></tr>
        <tr><td>14:23:35</td><td>塔斯社</td><td>中俄哈三方能源合作</td><td class="c-green">已入库</td></tr>
        <tr class="tall"><td>14:23:33</td><td>Afgha<wbr>nistan<br>Times</td><td>边境安全局势报告</td><td class="c-red">解析失败</td></tr>
      </tbody>
    </table>
    <div class="feed-foot"><span>每分钟处理: <b>180</b> 条</span><span>成功率: <b>98.5%</b></span></div>
  </section>
</div>
</main>

<footer class="site-footer">
  <p>© 2024 新疆及中亚地区综合信息系统</p>
  <p>Xinjiang and Central Asia Comprehensive Information System</p>
  <p class="foot-note"><svg class="ic"><use href="#i-shield"/></svg> 国家级信息安全等级保护三级 | <svg class="ic"><use href="#i-globe"/></svg> 覆盖11国150城 | <svg class="ic wide"><use href="#i-lang"/></svg> 支持6种语言 | <svg class="ic"><use href="#i-clock"/></svg> 7×24小时服务</p>
</footer>
<script src="map.js"></script>
</body>
</html>
```
FILE: styles.css
```css
* { box-sizing: border-box; margin: 0; padding: 0; }
body {
  position: relative;
  min-height: 100vh;
  font-family: "Noto Sans", "Liberation Sans", "Noto Sans CJK SC", sans-serif;
  font-size: 15px;
  line-height: 21px;
  color: #333;
  background: linear-gradient(135deg, #1e3c72 0%, #2a5298 100%);
}
ul { list-style: none; }
a { text-decoration: none; }
button, select { font: inherit; }
.sprite { position: absolute; width: 0; height: 0; }
.ic { width: 1em; height: 1em; fill: currentColor; color: inherit; flex: none; vertical-align: -2px; }
.ic.wide { width: 19px; }
.ic.wider { width: 20px; }
.ic.narrow { width: 14px; }
.cut { fill: none; stroke: #3a78c2; stroke-width: 36; }
.c-red { color: #e53e3e; } .c-orange { color: #dd6b20; } .c-blue { color: #4a90e2; } .c-green { color: #38a169; }

.particle { position: absolute; width: 4px; height: 4px; border-radius: 50%; background: rgba(255,255,255,.3); }
.particle-a { left: 85.500%; top: 325px; }
.particle-b { left: 85.800%; top: 428px; }

/* header */
.site-header { position: relative; padding: 15px; text-align: center; background: #1e3a70; box-shadow: 0 4px 20px rgba(0,0,0,.3); }
.lang-select { position: absolute; right: 19px; top: 19px; width: 85px; height: 32px; padding: 0 6px; font-size: 13px; color: #333; background: #e9edf3; border: 1px solid #dfe5ee; border-radius: 5px; }
.site-title { display: flex; justify-content: center; align-items: center; gap: 11px; font-size: 39px; line-height: 55px; font-weight: 300; color: #fff; text-shadow: 2px 2px 4px rgba(0,0,0,.3); }
.site-sub { margin-top: 4px; font-size: 17px; line-height: 24px; color: #a3bffa; }
.nav { display: flex; justify-content: center; gap: 36px; margin-top: 15px; padding: 16px; border-radius: 12px; background: rgba(255,255,255,.1); }
.nav a { display: flex; align-items: center; gap: 5px; height: 47px; padding: 0 24px; font-weight: 500; color: #fff; border: 1px solid rgba(255,255,255,.35); border-radius: 24px; background: rgba(255,255,255,.2); }
.nav .wide { width: 18px; }

/* layout */
.main { width: 1293px; max-width: calc(100% - 62px); margin: 0 auto; padding: 31px 0 92px; }
.top-grid { display: grid; grid-template-columns: 1fr 1fr; gap: 31px; margin-bottom: 26px; }
.card { padding: 31px; border-radius: 15px; background: #f4f6fb; box-shadow: 0 8px 30px rgba(0,0,0,.15); }
.card-title { display: flex; align-items: center; gap: 8px; padding-bottom: 6px; margin-bottom: 15px; border-bottom: 2px solid #e1effe; font-size: 20px; line-height: 28px; font-weight: 700; color: #2a5298; }
.card-title .ic { color: #4a90e2; width: 19px; height: 19px; }
.card-title .wide { width: 21px; }

/* monitoring */
.status-grid { display: grid; grid-template-columns: 1fr 1fr; gap: 16px; margin-top: 44px; }
.status { display: flex; align-items: center; gap: 17px; height: 86px; padding: 0 18px; border: 1px solid #bee8fb; border-radius: 12px; background: linear-gradient(135deg, #f0f9ff, #e0f2fe); }
.status strong { display: block; line-height: 20px; font-size: 16px; font-weight: 600; color: #1e40af; }
.status p { font-size: 13px; line-height: 18px; color: #64748b; }
.status-icon { display: flex; align-items: center; justify-content: center; width: 48px; height: 48px; border-radius: 12px; font-size: 22px; color: #fff; }
.status-icon.sky { background: linear-gradient(135deg, #0ea5e9, #0284c7); box-shadow: 0 4px 12px rgba(14,165,233,.3); }
.status-icon.green { background: linear-gradient(135deg, #22c55e, #16a34a); box-shadow: 0 4px 12px rgba(34,197,94,.3); }
.timebar { display: flex; align-items: center; justify-content: space-between; height: 50px; margin: 24px 0; padding: 0 15px; border-radius: 12px; font-family: "Liberation Mono", "Noto Sans CJK SC", monospace; font-size: 17px; color: #fff; background: linear-gradient(135deg, #667eea, #764ba2); box-shadow: 0 4px 15px rgba(102,126,234,.3); }
.timebar time { margin-right: 14px; font-weight: 700; }
.running { display: flex; align-items: center; color: #38a169; letter-spacing: 1px; }
.running::before { content: ""; width: 14px; height: 14px; margin-right: 3px; border-radius: 50%; background: #38a169; }
.metric-grid { display: grid; grid-template-columns: repeat(3, 1fr); gap: 16px; }
.metric { display: flex; align-items: center; gap: 13px; height: 79px; padding: 0 15px; border: 1px solid #d8e4f3; border-radius: 10px; background: linear-gradient(135deg, #f8fafc, #e2e8f0); }
.metric strong { display: block; font-size: 22px; line-height: 26px; color: #2a5298; }
.metric p { font-size: 13px; line-height: 22px; color: #666; }
.disc { display: flex; align-items: center; justify-content: center; width: 39px; height: 39px; flex: none; border-radius: 50%; font-size: 17px; color: #fff; background: linear-gradient(135deg, #4a90e2, #357abd); box-shadow: 0 2px 8px rgba(74,144,226,.3); }
.panel { margin-top: 24px; padding: 18px 19px; border: 1px solid #dbe6f5; border-radius: 12px; background: #e9eef7; }
.panel-head { display: flex; justify-content: space-between; margin-bottom: 15px; font-size: 13px; color: #4a90e2; }
.panel-head h3 { font-size: 16px; font-weight: 500; color: #2a5298; }
.panel-head .ic { margin-right: 4px; }
.panel-row { display: flex; align-items: center; justify-content: space-between; height: 48px; padding: 0 15px; border-left: 4px solid #4a90e2; border-radius: 8px; background: #fff; font-size: 14px; color: #4a5568; }
.panel-row + .panel-row { margin-top: 13px; }
.panel-row strong { font-size: 16px; color: #2a5298; }
.panel-row em { min-width: 38px; padding: 0 8px; line-height: 24px; border-radius: 12px; text-align: center; font-style: normal; font-weight: 600; font-size: 13px; color: #38a169; background: #e8f4ee; }
.panel-row .flat { color: #a0aec0; background: #f5f6f8; }

/* alerts */
.alert-grid { display: grid; grid-template-columns: 1fr 1fr; gap: 12px; }
.alert { height: 126px; padding: 10px 12px; border-radius: 8px; color: #fff; box-shadow: 0 4px 15px rgba(255,107,107,.2); white-space: nowrap; }
.alert .ic { display: block; height: 14px; margin: 1px 0 2px; }
.alert strong { display: block; line-height: 20px; }
.alert p { margin: 3px 0 4px; line-height: 24px; }
.alert small { display: block; font-size: 13px; line-height: 18px; opacity: .95; }
.alert.red { background: linear-gradient(135deg, #ff6b6b, #ee5a52); }
.alert.orange { background: linear-gradient(135deg, #feca57, #ff9ff3); }
.alert.cyan { background: linear-gradient(135deg, #48dbfb, #0abde3); }
.alert-sum { display: grid; grid-template-columns: repeat(4, 1fr); gap: 16px; margin-top: 31px; padding-top: 12px; border-top: 1px solid #e2e8f0; text-align: center; }
.alert-sum strong { display: block; font-size: 21px; line-height: 26px; }
.alert-sum span { display: block; font-size: 12px; line-height: 18px; color: #666; }
.alert-note { margin-top: 10px; font-size: 13px; line-height: 18px; text-align: center; color: #4a5568; }

/* map */
.map-card { margin-bottom: 36px; }
.map-bar { display: flex; align-items: center; justify-content: space-between; margin-bottom: 16px; }
.legend { display: flex; gap: 35px; padding: 4px 0 0 16px; }
.legend li { display: flex; align-items: center; gap: 13px; font-size: 15px; }
.legend li::before { content: ""; width: 12px; height: 12px; border-radius: 50%; background: #e17055; }
.legend .l-safe::before { background: #00b894; }
.legend .l-watch::before { background: #fdcb6e; }
.pause { display: flex; align-items: center; gap: 7px; height: 37px; padding: 0 18px; border: 0; border-radius: 19px; font-size: 14px; font-weight: 500; color: #fff; background: linear-gradient(135deg, #e53e3e, #c53030); box-shadow: 0 4px 12px rgba(74,144,226,.4); }
.map { position: relative; height: 484px; border-radius: 12px; overflow: hidden; background: #f2efe9; box-shadow: 0 8px 25px rgba(0,0,0,.1); }
.map-svg { display: block; width: 100%; height: 100%; }
.map-svg path { vector-effect: non-scaling-stroke; fill: none; }
.map-svg .sand path { fill: #f7edd0; }
.map-svg .sea path { fill: #aad3df; }
.map-svg .wood path, .map-svg .woodland { fill: #d2e8c0; }
.map-svg .glacier { fill: #a3d0fb; }
.marsh { stroke: #aad3df; stroke-width: 2; }
.road { stroke: #f3b3a0; stroke-width: 1; }
.road2 { stroke: #f5cdbd; stroke-width: 1; }
.state { stroke: #cfc0cf; stroke-width: 1; }
.border { stroke: #bda6bf; stroke-width: 2; }
.lines { stroke: #8a9fc0; stroke-width: 1; }
.map-svg text { font-family: "Noto Sans", "Noto Sans CJK SC", "DejaVu Sans", sans-serif; font-size: 10px; text-anchor: middle; dominant-baseline: central; fill: #333; stroke: #f6f4ef; stroke-width: 2; paint-order: stroke; }
.map-svg .region { font-style: italic; fill: #8f6a9c; }
.map-svg .country { font-size: 12px; fill: #7d5288; }
.map-svg .big { font-size: 12px; }
.town { fill: #fff; stroke: #666; stroke-width: 1; }
.marker { stroke: #fff; stroke-width: 2; fill-opacity: .8; }
.popup { position: absolute; left: 50%; top: 122px; width: 233px; height: 108px; margin-left: -116px; padding: 12px 19px; border-radius: 12px; font-size: 12px; line-height: 20px; color: #333; background: #fff; box-shadow: 0 3px 14px rgba(0,0,0,.4); }
.popup::after { content: ""; position: absolute; left: 50%; bottom: -10px; margin-left: -10px; border: 10px solid transparent; border-top-color: #fff; border-bottom: 0; }
.popup-title { display: block; margin-bottom: 3px; font-size: 12px; font-weight: 500; color: #2a5298; }
.popup b { font-weight: 600; }
.popup .risk { color: #e17055; }
.popup-close { position: absolute; right: 3px; top: 0; width: 16px; height: 22px; border: 0; font-size: 16px; font-weight: 600; color: #aaa; background: none; }
.zoom { position: absolute; left: 10px; top: 10px; border: 2px solid rgba(0,0,0,.2); border-radius: 4px; overflow: hidden; background: #fff; }
.zoom button { display: block; width: 29px; height: 29px; border: 0; font: 700 20px/28px "Liberation Sans", sans-serif; color: #000; background: #fff; }
.zoom button + button { border-top: 1px solid #ccc; }
.scale { position: absolute; left: 5px; bottom: 5px; font-family: "Liberation Sans", sans-serif; font-size: 12px; line-height: 14px; color: #333; }
.scale span { display: block; padding: 0 5px; border: 2px solid #777; background: rgba(255,255,255,.6); white-space: nowrap; }
.scale .km { width: 51px; border-top: 0; }
.scale .mi { width: 80px; border-bottom: 0; margin-top: -2px; }
.attrib { position: absolute; right: 0; bottom: 0; padding: 0 5px; font: 12px/18px "Liberation Sans", sans-serif; color: #333; background: rgba(255,255,255,.8); }
.attrib a { color: #0078a8; }

/* feeds */
.feeds { display: grid; grid-template-columns: repeat(3, 1fr); gap: 31px; }
.feed { display: flex; flex-direction: column; }
.feed h3 { display: flex; align-items: center; justify-content: center; gap: 5px; margin-bottom: 21px; font-size: 18px; line-height: 26px; color: #333; }
.feed h3 .wide { width: 21px; }
.feed h3 .narrow { width: 16px; }
.feed ul { display: grid; gap: 12px; margin-bottom: 27px; }
.feed li { height: 97px; padding-top: 16px; border-left: 4px solid #4a90e2; border-radius: 8px; text-align: center; background: #f8fafc; white-space: nowrap; }
.feed li.red { border-color: #e53e3e; background: #fff5f5; }
.feed li.orange { border-color: #dd6b20; background: #fffbf0; }
.feed li.green { border-color: #38a169; background: #f0fff4; }
.feed li strong { display: flex; align-items: center; justify-content: center; gap: 8px; margin-bottom: 4px; font-weight: 500; color: #2d3748; }
.feed li svg { width: 16px; height: 16px; }
.feed li small { font-size: 13px; color: #718096; }
.feed-foot { display: flex; flex-wrap: wrap; justify-content: space-between; gap: 6px 12px; margin-top: auto; padding-top: 15px; border-top: 1px solid #e2e8f0; font-size: 14px; line-height: 20px; color: #4a5568; }
.stream { width: 100%; margin-top: 15px; table-layout: fixed; border-collapse: collapse; overflow-wrap: anywhere; }
.stream th { height: 46px; padding: 0 9px; text-align: left; font-weight: 600; color: #2a5298; background: #f8fafc; border-bottom: 1px solid #e2e8f0; }
.stream td { height: 95px; padding: 0 9px; border-bottom: 1px solid #e2e8f0; }
.stream td:first-child { word-break: break-all; }
.stream td:nth-child(3) { padding-right: 17px; }
.stream td:last-child { font-weight: 600; }
.stream .tall td { height: 125px; }
.stream tr:last-child td { border-bottom: 0; }
.t-time { width: 52px; } .t-src { width: 70px; } .t-stat { width: 70px; }
.stream + .feed-foot { padding-top: 14px; }

.site-footer { padding: 31px 15px 29px; text-align: center; color: #fff; background: #1e3a70; }
.foot-note { margin-top: 15px; color: #d2d8e3; }
.foot-note .ic { margin: 0 1px; }
.foot-note .cut { stroke: #1e3a70; }
```
FILE: map.js
```js
// Sheet coordinates (x 47..1514, y 334..1470) are projected onto the 1272 x 500 map.
const NS = 'http://www.w3.org/2000/svg';
const px = x => ((x - 47) * 0.8673).toFixed(1);
const py = y => ((y - 334) * 0.4401).toFixed(1);

const labels = [
  [519, 420, 'Darganata'], [867, 383, 'Guliston'], [910, 340, 'Olmaliq'], [1107, 355, 'Абад'], [1055, 390, 'Andijon', 'big'],
  [980, 415, "Qo'qon"], [816, 470, 'Jizzax'], [638, 477, 'Buxoro', 'big'], [559, 520, 'Seýdi'], [110, 551, 'Balkanabat'],
  [210, 587, 'Gyzylarbat'], [211, 660, 'Magtymguly'], [131, 760, 'Etrek'], [321, 718, 'Aşgabat', 'big'], [427, 757, 'Babadaýhan'],
  [503, 769, 'Mary'], [443, 811, 'Altyn Asyr'], [386, 836, 'Kaka'], [470, 908, 'Sarahs'], [1184, 1216, 'Srinagar', 'big'],
  [1186, 1384, 'Jammu', 'big'], [1227, 1442, 'Pathankot'], [1222, 517, '喀什市', 'big'], [1270, 520, 'قەشقەر'],
  [1380, 517, '巴楚县'], [1380, 547, 'مارالبېشى'], [1313, 559, '岳普湖县'], [1306, 589, 'يوپۇرغا'], [1254, 632, '英吉沙县'],
  [1254, 662, 'يېڭىسار'], [1311, 634, '莎车县'], [1311, 664, 'يەكەن'], [1311, 732, '泽普县'], [1311, 762, 'پوسكام'],
  [1365, 740, '皮山县'], [1365, 770, 'گۇما'], [1433, 878, '和田市', 'big'], [1474, 880, 'خوتەن'], [1352, 903, '和康县'],
  [1352, 931, 'خېكاڭ'], [1413, 1018, '和安县'], [1413, 1048, 'خېيان'], [1450, 342, '阿克苏市', 'big'], [1494, 343, 'قسۇ'], [1507, 417, '阿'],
  [345, 607, 'Türkmenistan', 'country'], [981, 620, 'Тоҷикистон', 'country'], [679, 1255, 'افغانستان', 'country'],
  [596, 438, 'Buxoro Viloyati', 'region'], [800, 420, 'Jizzax Viloyati', 'region'], [736, 461, 'Samarqand', 'region'],
  [736, 488, 'Viloyati', 'region'], [885, 456, 'Вилояти', 'region'], [885, 484, 'Суғд', 'region'], [1013, 472, 'Баткен', 'region'],
  [1013, 499, 'облусу', 'region'], [1108, 446, 'Ош облусу', 'region'], [552, 590, 'Lebap welaýaty', 'region'], [726, 618, 'Qashqadaryo', 'region'],
  [132, 485, 'alkan welaýaty', 'region'], [518, 821, 'Mary welaýaty', 'region'], [1092, 682, 'Вилояти', 'region'], [1092, 709, 'Мухтори', 'region'],
  [1092, 736, 'Кӯҳистони', 'region'], [1092, 763, 'Бадахшон', 'region'], [1311, 1243, 'Ladakh', 'region'],
  [1208, 1291, 'Jammu and', 'region'], [1208, 1318, 'Kashmir', 'region'], [259, 796, 'استان خراسان', 'region'], [259, 823, 'شمالی', 'region'],
  [130, 825, 'استان گلستان', 'region'], [355, 1004, 'استان خراسان', 'region'], [355, 1032, 'رضوی', 'region'], [144, 1020, 'استان سمنان', 'region'],
  [312, 1377, 'استان خراسان', 'region'], [312, 1404, 'جنوبی', 'region'], [594, 1087, 'ولایت بادغیس', 'region'], [514, 1216, 'ولایت هرات', 'region'],
  [739, 1291, 'ولایت دایکندی', 'region'], [812, 1353, 'ولایت غزنی', 'region'], [532, 1433, 'ولایت فراه', 'region'], [775, 1457, 'زابل ولایت', 'region'],
  [860, 1432, 'پکتیکا ولایت', 'region'], [792, 1160, 'ولایت بامیان', 'region'], [726, 1032, 'سرپل', 'region'], [811, 996, 'ولایت سمنگان', 'region'],
  [884, 1021, 'ولایت بغلان', 'region'], [768, 928, 'ولایت بلخ', 'region'], [912, 905, 'تخار ولایت', 'region'], [657, 954, 'ولایت فاریاب /', 'region'],
  [657, 981, 'فاریاب ولایتی', 'region'], [1107, 868, 'ولایت بدخشان', 'region'], [1187, 1021, 'گلگت بلتستان', 'region'],
  [114, 911, 'گرگان', 'big'], [142, 959, 'شاهرود'], [284, 950, 'سبزوار'], [343, 950, 'نیشابور'], [386, 936, 'مشهد', 'big'], [61, 1067, 'سمنان'],
  [439, 1073, 'تربت جام'], [388, 1387, 'بیرجند'], [708, 891, 'شبرغان'], [855, 903, 'قندوز'], [717, 951, 'سر پل'], [826, 943, 'سمنگان'],
  [878, 980, 'بغلان'], [905, 1064, 'بازارک'], [896, 1137, 'محمود راقی'], [991, 1120, 'اسدآبادښار'], [888, 1210, 'کابل', 'big'],
  [955, 1216, 'جلال آباد'], [847, 1288, 'غزنی'], [890, 1316, 'گردیز'], [1054, 1171, 'مینگورہ'], [1038, 1207, 'مردان'], [1112, 1182, 'مظفر آباد'],
  [1013, 1270, 'پشاور', 'big'], [1092, 1261, 'اسلام آباد', 'big'], [962, 1391, 'بنوں', 'big'], [1010, 1408, 'میانوالی'], [1112, 1404, 'منڈی بہاؤالدین'],
  [1127, 1336, 'میرپور'], [1150, 1452, 'گوجرانوالہ', 'big'], [1071, 1456, 'سرگودھا', 'big'], [980, 1458, 'ڈیرہ اسماعیل'], [1227, 1069, 'سکردو']
];
const towns = [[519, 400], [867, 400], [910, 356], [1054, 362], [980, 394], [817, 450], [559, 536], [110, 534], [211, 604], [211, 677], [131, 777],
  [427, 774], [503, 786], [443, 828], [386, 817], [470, 925], [1184, 1236], [1186, 1403], [1254, 609], [1285, 571], [1380, 495], [1311, 680],
  [1311, 708], [1365, 787], [1451, 850], [1352, 948], [1413, 995], [114, 884], [142, 938], [284, 966], [343, 966], [59, 1046], [439, 1089],
  [366, 1387], [708, 907], [872, 899], [717, 967], [826, 960], [862, 977], [905, 1080], [896, 1115], [991, 1137], [888, 1180], [955, 1191],
  [847, 1304], [890, 1297], [1054, 1147], [1038, 1222], [1112, 1161], [1014, 1243], [1091, 1284], [962, 1370], [1010, 1422], [1227, 1085]];
const markers = [[638, 497, '#00b894'], [770, 514, '#00b894'], [911, 429, '#00b894'], [1077, 395, '#00b894'], [1244, 538, '#00b894'],
  [596, 591, '#fdcb6e'], [381, 952, '#fdcb6e'], [318, 738, '#e17055'], [780, 903, '#e17055']];

function add(parent, name, attrs, text) {
  const el = document.createElementNS(NS, name);
  for (const key in attrs) el.setAttribute(key, attrs[key]);
  if (text) el.textContent = text;
  parent.appendChild(el);
}

let seed = 7;
const rnd = () => (seed = (seed * 16807) % 2147483647) / 2147483647;

// Scatter small patches along a band between two points.
function band(x1, y1, x2, y2, spreadX, spreadY, count, size) {
  let d = '';
  for (let i = 0; i < count; i++) {
    const t = rnd();
    const x = x1 + (x2 - x1) * t + (rnd() + rnd() - 1) * spreadX;
    const y = y1 + (y2 - y1) * t + (rnd() + rnd() - 1) * spreadY;
    const w = 1 + rnd() * size * 0.7, h = 3 + rnd() * size * 2;
    d += `M${x.toFixed(0)} ${y.toFixed(0)}l${w.toFixed(1)} ${(-h / 2).toFixed(1)} ${w.toFixed(1)} ${(h / 2).toFixed(1)} ${(-w).toFixed(1)} ${(h / 2).toFixed(1)}z`;
  }
  return d;
}

document.getElementById('glaciers').setAttribute('d',
  band(920, 535, 1010, 530, 16, 22, 90, 4) + band(1040, 570, 1130, 545, 25, 30, 120, 4) + band(1040, 600, 1050, 740, 25, 60, 180, 5) +
  band(1110, 600, 1200, 820, 35, 60, 60, 3) + band(950, 950, 1110, 880, 40, 40, 160, 4) + band(1110, 880, 1200, 960, 40, 50, 240, 5) +
  band(1190, 960, 1320, 1110, 45, 70, 560, 5) + band(1310, 1100, 1350, 1290, 25, 50, 180, 4) + band(1220, 1180, 1320, 1450, 28, 50, 240, 4) +
  band(1340, 880, 1420, 1050, 60, 100, 70, 3) + band(1460, 1050, 1510, 1080, 25, 40, 130, 5) + band(1380, 1280, 1500, 1440, 50, 80, 70, 3) +
  band(1030, 940, 1060, 1020, 30, 60, 60, 4) + band(1200, 380, 1330, 360, 50, 40, 14, 4));
document.getElementById('woodland').setAttribute('d',
  band(1030, 1020, 1050, 1180, 30, 70, 260, 6) + band(1090, 1080, 1170, 1200, 45, 60, 280, 6) + band(1160, 1220, 1240, 1430, 50, 90, 480, 6) +
  band(940, 1260, 980, 1320, 40, 60, 120, 5) + band(900, 1400, 930, 1460, 20, 40, 70, 5) + band(800, 540, 870, 560, 30, 50, 50, 5) +
  band(1080, 1320, 1120, 1280, 30, 40, 70, 4) + band(440, 1060, 460, 1120, 12, 30, 14, 3));

const labelLayer = document.getElementById('labels');
towns.forEach(([x, y]) => add(labelLayer, 'circle', { cx: px(x), cy: py(y), r: 2, class: 'town' }));
labels.forEach(([x, y, text, kind]) => add(labelLayer, 'text', { x: px(x), y: py(y), class: kind || 'city' }, text));
const markerLayer = document.getElementById('markers');
markers.forEach(([x, y, fill]) => add(markerLayer, 'circle', { cx: px(x), cy: py(y), r: 8, fill, class: 'marker' }));
```
